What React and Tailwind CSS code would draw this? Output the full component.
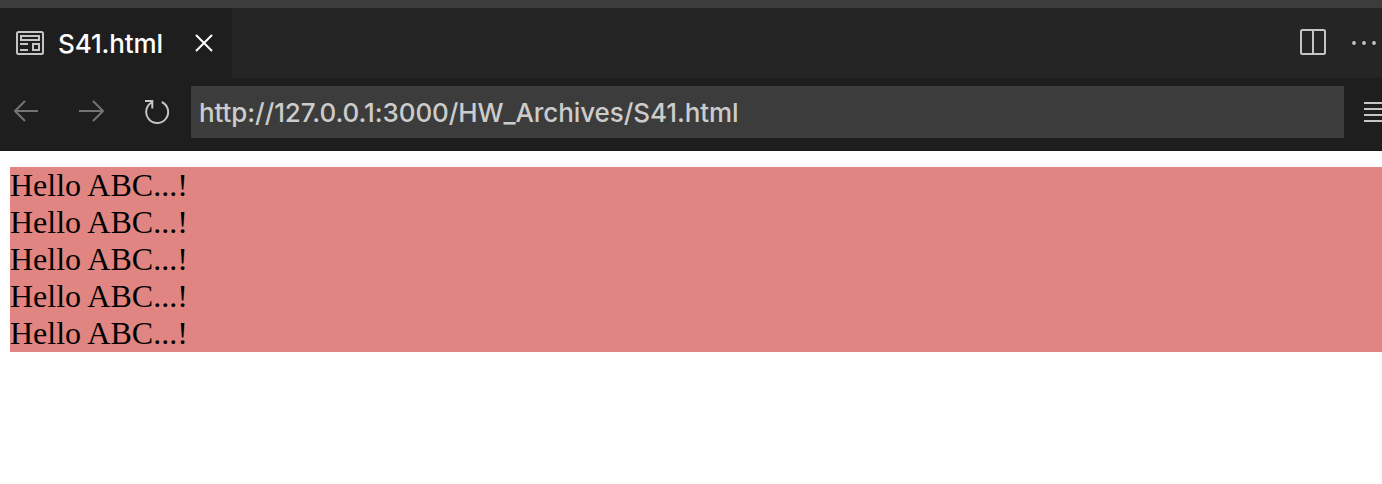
const LINES = ["Hello ABC...!", "Hello ABC...!", "Hello ABC...!", "Hello ABC...!", "Hello ABC...!"];

function Icon({ className, width, height, children, strokeWidth = 2 }) {
  return (
    <svg
      className={`block shrink-0 ${className}`}
      width={width}
      height={height}
      viewBox={`0 0 ${width} ${height}`}
      fill="none"
      stroke="currentColor"
      strokeWidth={strokeWidth}
      aria-hidden="true"
    >
      {children}
    </svg>
  );
}

function TabBar() {
  return (
    <div className="flex h-[70px] shrink-0 bg-[#252525]">
      <div className="flex w-[232px] shrink-0 items-start bg-[#1e1e1e] pl-4">
        <Icon className="mt-[23px] text-[#c5c5c5]" width={28} height={24}>
          <rect x="1" y="1" width="26" height="22" rx="1.5" />
          <rect x="5" y="5" width="18" height="4" />
          <path d="M4 13h8M4 19h8" />
          <rect x="17" y="13" width="6" height="6" />
        </Icon>
        <span className="ml-3.5 mt-5 w-[108px] whitespace-nowrap text-[26px] font-medium leading-8 tracking-[-0.15px] text-white">
          S41.html
        </span>
        <Icon className="ml-[29px] mt-[26px] text-white" width={18} height={18}>
          <path d="M1 1l16 16M17 1L1 17" />
        </Icon>
      </div>
      <div className="flex flex-1 items-start justify-end text-[#c5c5c5]">
        <Icon className="mt-[21px]" width={26} height={26}>
          <rect x="1" y="1" width="24" height="24" rx="1.5" />
          <path d="M13 1v24" />
        </Icon>
        <Icon className="ml-[26px] mt-[33px]" width={30} height={4}>
          <g fill="currentColor" stroke="none">
            <circle cx="2" cy="2" r="1.9" />
            <circle cx="12" cy="2" r="1.9" />
            <circle cx="22" cy="2" r="1.9" />
          </g>
        </Icon>
      </div>
    </div>
  );
}

function NavigationBar() {
  return (
    <div className="flex h-[73px] shrink-0 items-start border-b border-[#171717] bg-[#1e1e1e] pt-2 pl-3.5">
      <Icon className="mt-[14px] text-[#747474]" width={24} height={22}>
        <path d="M24 11H1M11 1L1 11l10 10" />
      </Icon>
      <Icon className="ml-[41px] mt-[14px] text-[#747474]" width={25} height={22}>
        <path d="M0 11h24M14 1l10 10-10 10" />
      </Icon>
      <Icon className="ml-[41px] mt-[13px] text-[#c5c5c5]" width={24} height={26}>
        <path d="M0 2h7.3v7.5M6.6 3.5A11 11 0 1 0 16.8 3" />
      </Icon>
      <div className="ml-[22px] flex h-[52px] w-[1153px] shrink-0 items-center whitespace-nowrap bg-[#3c3c3c] pt-0.5 pl-2 text-[26px] font-medium leading-8 tracking-[-0.09px] text-[#cccccc]">
        http://127.0.0.1:3000/HW_Archives/S41.html
      </div>
      <Icon className="ml-5 mt-[16px] text-[#c5c5c5]" width={18} height={20}>
        <path d="M0 1h18M0 7h18M0 13h18M0 19h18" />
      </Icon>
    </div>
  );
}

export default function App() {
  return (
    <div className="flex h-[484px] w-[1382px] flex-col overflow-hidden bg-white font-['Inter',sans-serif]">
      <div className="h-2 shrink-0 bg-[#3c3c3c]" />
      <TabBar />
      <NavigationBar />
      <main className="ml-2.5 mt-4 bg-[#e08581] font-['Liberation_Serif',serif] text-[32px] leading-[37px] text-black">
        {LINES.map((line, index) => (
          <p key={index} className="whitespace-nowrap">
            {line}
          </p>
        ))}
      </main>
    </div>
  );
}
